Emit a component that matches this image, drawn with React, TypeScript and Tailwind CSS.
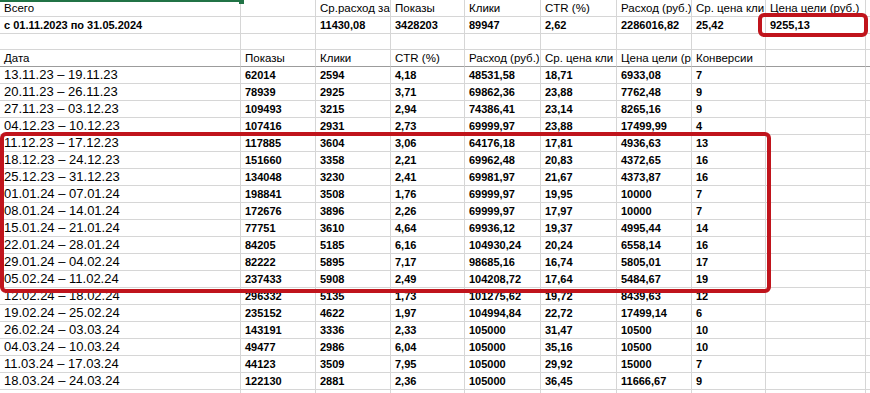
const COLS = 'grid grid-cols-[241px_75px_75px_74px_76px_76px_75px_74px_100px_1fr]';
const cellCls = 'flex items-end overflow-hidden whitespace-nowrap border-r border-b border-[#d6d6d6] pl-[4px] pb-[2px] leading-none text-black';

// visible parts of the headers, as the sheet clips them
const header1 = ['Всего', '', 'Ср.расход за', 'Показы', 'Клики', 'CTR (%)', 'Расход (руб.)', 'Ср. цена кли', 'Цена цели (руб.)', ''];
const totals = ['с 01.11.2023 по 31.05.2024', '', '11430,08', '3428203', '89947', '2,62', '2286016,82', '25,42', '9255,13', ''];
const header2 = ['Дата', 'Показы', 'Клики', 'CTR (%)', 'Расход (руб.)', 'Ср. цена кли', 'Цена цели (р', 'Конверсии', '', ''];

const rows: string[][] = [
  ['13.11.23 – 19.11.23', '62014', '2594', '4,18', '48531,58', '18,71', '6933,08', '7'],
  ['20.11.23 – 26.11.23', '78939', '2925', '3,71', '69862,36', '23,88', '7762,48', '9'],
  ['27.11.23 – 03.12.23', '109493', '3215', '2,94', '74386,41', '23,14', '8265,16', '9'],
  ['04.12.23 – 10.12.23', '107416', '2931', '2,73', '69999,97', '23,88', '17499,99', '4'],
  ['11.12.23 – 17.12.23', '117885', '3604', '3,06', '64176,18', '17,81', '4936,63', '13'],
  ['18.12.23 – 24.12.23', '151660', '3358', '2,21', '69962,48', '20,83', '4372,65', '16'],
  ['25.12.23 – 31.12.23', '134048', '3230', '2,41', '69981,97', '21,67', '4373,87', '16'],
  ['01.01.24 – 07.01.24', '198841', '3508', '1,76', '69999,97', '19,95', '10000', '7'],
  ['08.01.24 – 14.01.24', '172676', '3896', '2,26', '69999,97', '17,97', '10000', '7'],
  ['15.01.24 – 21.01.24', '77751', '3610', '4,64', '69936,12', '19,37', '4995,44', '14'],
  ['22.01.24 – 28.01.24', '84205', '5185', '6,16', '104930,24', '20,24', '6558,14', '16'],
  ['29.01.24 – 04.02.24', '82222', '5895', '7,17', '98685,16', '16,74', '5805,01', '17'],
  ['05.02.24 – 11.02.24', '237433', '5908', '2,49', '104208,72', '17,64', '5484,67', '19'],
  ['12.02.24 – 18.02.24', '296332', '5135', '1,73', '101275,62', '19,72', '8439,63', '12'],
  ['19.02.24 – 25.02.24', '235152', '4622', '1,97', '104994,84', '22,72', '17499,14', '6'],
  ['26.02.24 – 03.03.24', '143191', '3336', '2,33', '105000', '31,47', '10500', '10'],
  ['04.03.24 – 10.03.24', '49477', '2986', '6,04', '105000', '35,16', '10500', '10'],
  ['11.03.24 – 17.03.24', '44123', '3509', '7,95', '105000', '29,92', '15000', '7'],
  ['18.03.24 – 24.03.24', '122130', '2881', '2,36', '105000', '36,45', '11666,67', '9'],
];

function SheetRow({ cells, height, kind }: { cells: string[]; height: string; kind: 'head' | 'total' | 'colhead' | 'empty' }) {
  return (
    <div className={`${COLS} ${height}`}>
      {cells.map((c, i) => (
        <div
          key={i}
          className={`${cellCls} ${kind === 'total' ? 'text-[11px] font-bold' : 'text-[11.5px]'} ${kind === 'colhead' ? 'border-b-[#9c9c9c]' : ''}`}
        >
          {c}
        </div>
      ))}
    </div>
  );
}

export default function App() {
  return (
    <div className="relative w-[870px] h-[393px] overflow-hidden bg-white" style={{ fontFamily: '"Liberation Sans", Arial, sans-serif' }}>
      <SheetRow cells={header1} height="h-[17px]" kind="head" />
      <SheetRow cells={totals} height="h-[17px]" kind="total" />
      <SheetRow cells={Array(10).fill('')} height="h-[16px]" kind="empty" />
      <SheetRow cells={header2} height="h-[17px]" kind="colhead" />

      {rows.map((r, ri) => (
        <div key={ri} className={`${COLS} h-[17px]`}>
          <div className={`${cellCls} text-[13px] text-[#111]`}>{r[0]}</div>
          {r.slice(1).map((v, i) => (
            <div key={i} className={`${cellCls} text-[11px] font-bold`}>{v}</div>
          ))}
          <div className={cellCls}></div>
          <div className={cellCls}></div>
        </div>
      ))}
      <div className={`${COLS} h-[17px]`}>
        {Array(10).fill('').map((_, i) => <div key={i} className={cellCls}></div>)}
      </div>

      {/* selection edge from the cell above */}
      <div className="absolute left-0 top-0 w-[241px] h-[2px] bg-[#217346]" />
      <div className="absolute left-[239px] top-0 w-[5px] h-[4px] bg-[#217346]" />

      {/* red highlight frames */}
      <div className="absolute left-[758px] top-[13px] w-[110px] h-[24px] border-4 border-[#c0141c] rounded-[6px]" />
      <div className="absolute left-0 top-[132px] w-[771px] h-[161px] border-4 border-[#c0141c] rounded-[6px]" />
    </div>
  );
}
